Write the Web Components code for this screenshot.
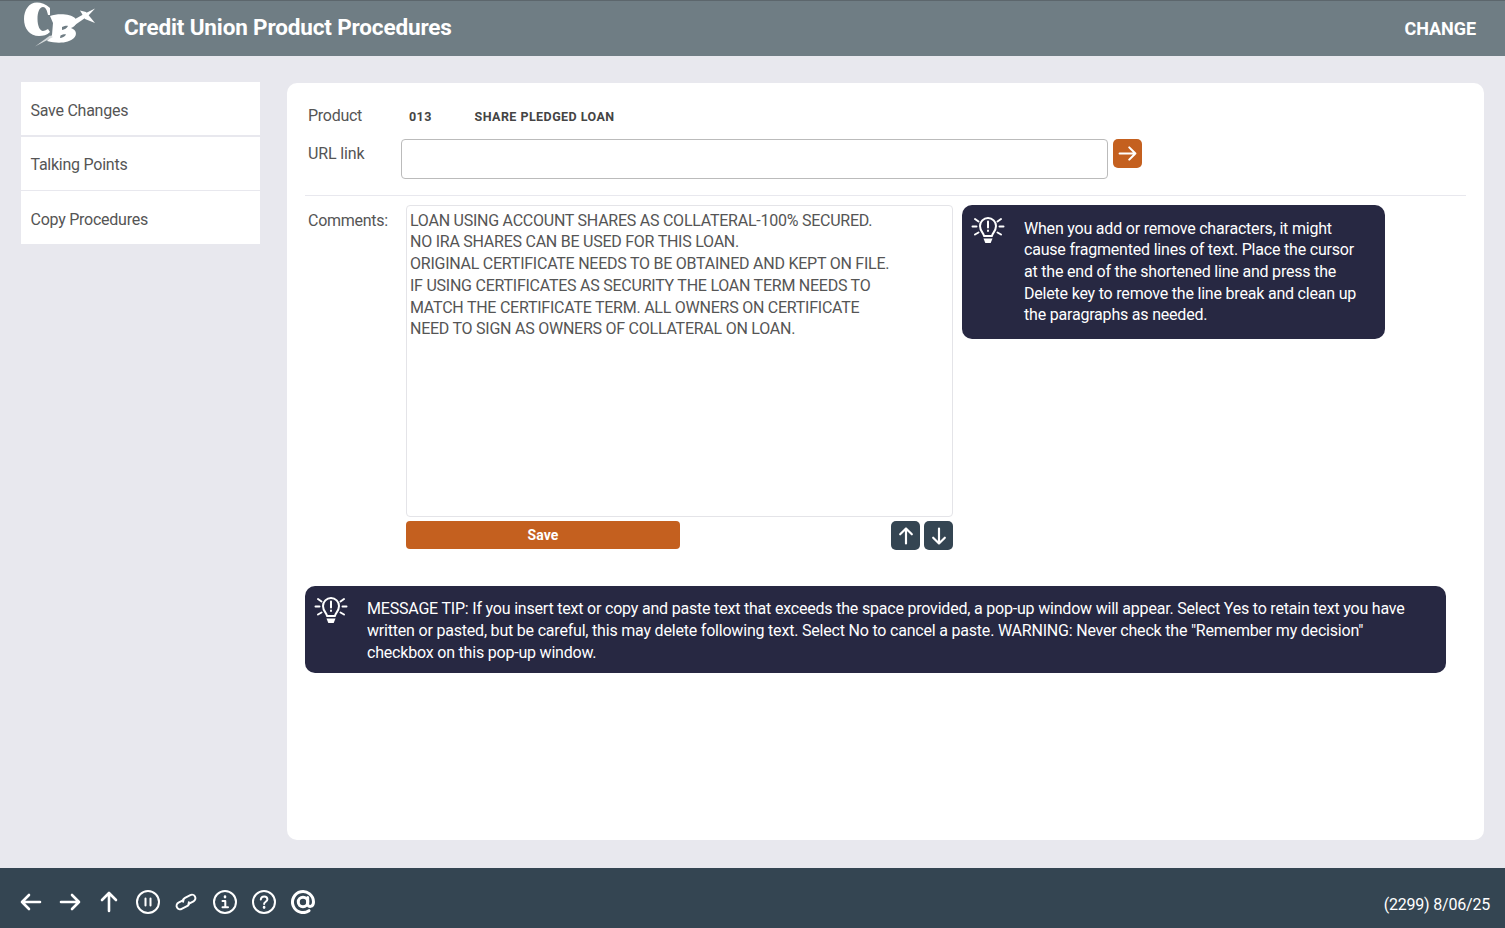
<!DOCTYPE html>
<html><head><meta charset="utf-8"><style>
html,body{margin:0;height:100%}
body{background:#e8e8ee;font-family:Roboto,"Liberation Sans",sans-serif;overflow:hidden}
cu-app{height:928px}
</style></head><body>
<cu-app>
<cu-header slot="header" title="Credit Union Product Procedures" action="CHANGE"></cu-header>
<cu-sidebar slot="side"><cu-nav-item>Save Changes</cu-nav-item><cu-nav-item>Talking Points</cu-nav-item><cu-nav-item>Copy Procedures</cu-nav-item></cu-sidebar>
<cu-panel slot="main"></cu-panel>
<cu-footer slot="footer"></cu-footer>
</cu-app>
<script>
const bulb=`<svg viewBox="0 0 34 32" width="34" height="32" fill="none" stroke="#fff" stroke-width="2" stroke-linecap="round" style="display:block"><path d="M13 21c0-3-4-4.500-4-10a8 8 0 0 1 16 0c0 5.500-4 7-4 10z" stroke-linejoin="round"/><path d="M17 6.500v6M17 15.500v.5"/><path d="M12.500 23.500h9l-1.800 4.500h-5.400z" fill="#fff" stroke="none"/><path d="M1.500 11.500h4M28.500 11.500h4M4 4l3.500 2.500M30 4L26.500 6.500M4 19.500L7.500 17.500M30 19.500L26.500 17.500"/></svg>`;
const arrow=(r,s=2,size=24)=>`<svg viewBox="0 0 24 24" width="${size}" height="${size}" fill="none" stroke="#fff" stroke-width="${s}" stroke-linecap="round" stroke-linejoin="round" style="transform:rotate(${r}deg);display:block"><path d="M3 12h18M14 5l7 7-7 7"/></svg>`;
const def=(n,css,html)=>customElements.define(n,class extends HTMLElement{constructor(){super();this.attachShadow({mode:'open'}).innerHTML=`<style>${css}</style>${html}`}connectedCallback(){const s=this.shadowRoot;s.querySelectorAll('[data-attr]').forEach(e=>e.textContent=this.getAttribute(e.dataset.attr)||'')}});
def('cu-app',`:host{display:grid;grid-template-rows:56px 1fr 60px;grid-template-columns:287px 1fr;height:928px}
::slotted([slot=header]),::slotted([slot=footer]){grid-column:1/3}`,`<slot name="header"></slot><slot name="side"></slot><slot name="main"></slot><slot name="footer"></slot>`);
def('cu-header',`:host{display:flex;align-items:center;background:#6f7d84;color:#fff;height:56px;box-sizing:border-box;border-top:1px solid #5c666c;padding:0 29px 1px 21px}
svg{display:block;flex:none;margin-top:-6px}
h1{font:700 22.500px Roboto,sans-serif;margin:-2px 0 0 27px;flex:1;letter-spacing:-.15px;white-space:nowrap}
span{font:700 18px Roboto,sans-serif;letter-spacing:-.05px}`,
`<svg width="76" height="50" viewBox="21 1 76 50"><path d="M50 9C46 5 41 3.500 37 3.500 29 3.500 24 11 24 20 24 30 30 37 39 37 43 37 47 36 50 33L48 30C46 31 44 32 43 32 40 32 37.500 27 37.500 20 37.500 13 39.500 8 43 8 45.500 8 47 11 48 16L50 16Z" fill="#fff"/><path d="M50 17C58 14 71 15 75 19 78 23 76 27 71 29 77 31 77 36 74 39 69 44 58 45 47 42L52 36 53 24Z" fill="#fff"/><path d="M62 28C64.500 27 67 26.500 68 27 67 29.500 64.500 30.500 62 31ZM60.500 36.500C62.500 35.500 65 35 66 35.500 65 37.800 62 39 60 39Z" fill="#6f7d84"/><path d="M68 24L84 15 95 9.500 88 17 72 28Z" fill="#fff"/><path d="M80 11.500L86 13 95 24 85 20Z" fill="#fff"/><path d="M35 47.500L50 36.500 53 38Z" fill="#d6dadc"/></svg><h1 data-attr="title"></h1><span data-attr="action"></span>`);
def('cu-sidebar',`:host{display:block;margin:26px 27px 0 21px;align-self:start;background:#fff}`,`<slot></slot>`);
def('cu-nav-item',`:host{display:flex;align-items:center;height:54px;padding:2px 0 0 9.500px;color:#555;font-size:16px;letter-spacing:-.25px;border-bottom:1px solid #e8e8ee;box-sizing:border-box}
:host(:first-child){border-bottom-width:2px;height:55px;padding-top:4px}
:host(:last-child){border-bottom:0;height:53px;padding-top:4px}`,`<slot></slot>`);
def('cu-tip',`:host{display:flex;background:#272842;color:#fff;border-radius:10px;font-size:16px;letter-spacing:-.2px}
.i{flex:none;margin:-3px 19px 0 0}.t{white-space:pre-line}`,`<div class="i">${bulb}</div><div class="t"><slot></slot></div>`);
def('cu-icon-btn',`:host{display:flex;align-items:center;justify-content:center;width:29px;height:29px;border-radius:5px;flex:none;background:var(--bg,#344552)}`,`<slot></slot>`);
def('cu-panel',`:host{display:block;margin:27px 21px 28px 0;background:#fff;border-radius:10px;padding:0 18px;color:#555;box-sizing:border-box;font-size:16px;letter-spacing:-.27px}
.prod{display:flex;align-items:center;height:27px;padding-left:3px}
.top{padding-top:19px}
label{width:93px;flex:none;display:block}
b{font-size:12.500px;font-weight:700;letter-spacing:.45px;color:#444;margin-top:2px}
b.c{width:65.500px;margin-left:8px}
.url{display:flex;align-items:flex-start;padding-left:3px;margin-top:10px}
.url label{padding-top:5px;line-height:19px;letter-spacing:-.15px}
.box{width:705px;height:38px;border:1px solid #bbb;border-radius:4px;background:#fff;margin-right:5px;flex:none}
.url cu-icon-btn{--bg:#c4601f}
hr{border:0;border-top:1px solid #e8e8ee;margin:16px 0 0}
.cm{display:flex;margin-top:9px;padding-left:3px}
.cm label{width:98px;line-height:19px;padding-top:6px}
.col{width:547px;flex:none}
.ta{box-sizing:border-box;height:312px;border:1px solid #e4e4e8;border-radius:4px;padding:3.700px 3px;line-height:21.700px;letter-spacing:-.245px;white-space:pre-line;color:#555;font-size:16px}
.act{display:flex;margin-top:4px;align-items:flex-start}
.save{width:274px;height:28px;background:#c4601f;border-radius:4px;color:#fff;font-weight:700;font-size:14px;letter-spacing:.1px;display:flex;align-items:center;justify-content:center}
.arr{margin-left:auto;display:flex;gap:4px}
.side{margin-left:9px;width:423px;height:134px;flex:none;padding:12.600px 20px 0 9px;box-sizing:border-box;line-height:21.700px}
.msg{width:1141px;height:87px;box-sizing:border-box;margin-top:36px;padding:12px 20px 0 9px;line-height:22px}`,
`<div class="top"></div><div class="prod"><label>Product</label><b class="c">013</b><b>SHARE PLEDGED LOAN</b></div>
<div class="url"><label>URL link</label><div class="box"></div><cu-icon-btn>${arrow(0,2.4,21)}</cu-icon-btn></div><hr>
<div class="cm"><label>Comments:</label><div class="col"><div class="ta">LOAN USING ACCOUNT SHARES AS COLLATERAL-100% SECURED.
NO IRA SHARES CAN BE USED FOR THIS LOAN.
ORIGINAL CERTIFICATE NEEDS TO BE OBTAINED AND KEPT ON FILE.
IF USING CERTIFICATES AS SECURITY THE LOAN TERM NEEDS TO
MATCH THE CERTIFICATE TERM. ALL OWNERS ON CERTIFICATE
NEED TO SIGN AS OWNERS OF COLLATERAL ON LOAN.</div>
<div class="act"><div class="save">Save</div><div class="arr"><cu-icon-btn>${arrow(-90,2.6,20)}</cu-icon-btn><cu-icon-btn>${arrow(90,2.6,20)}</cu-icon-btn></div></div></div>
<cu-tip class="side">When you add or remove characters, it might
cause fragmented lines of text. Place the cursor
at the end of the shortened line and press the
Delete key to remove the line break and clean up
the paragraphs as needed.</cu-tip></div>
<cu-tip class="msg">MESSAGE TIP: If you insert text or copy and paste text that exceeds the space provided, a pop-up window will appear. Select Yes to retain text you have
written or pasted, but be careful, this may delete following text. Select No to cancel a paste. WARNING: Never check the "Remember my decision"
checkbox on this pop-up window.</cu-tip>`);
const ic={
pause:`<circle cx="12" cy="12" r="11"/><path d="M9.500 8.500v7M14.500 8.500v7"/>`,
link:`<g transform="rotate(-27 12 12)"><path d="M10.500 9.200H5a3.500 3.500 0 0 0 0 7h6a3.500 3.500 0 0 0 3.400-2.700"/><path d="M13.500 14.800H19a3.500 3.500 0 0 0 0-7h-6a3.500 3.500 0 0 0-3.400 2.700"/></g>`,
info:`<circle cx="12" cy="12" r="11"/><path d="M12 6.500v.6" stroke-width="2.600"/><path d="M9.500 11H12.300V17M9.500 17.300h5.500"/>`,
help:`<circle cx="12" cy="12" r="11"/><path d="M8.800 9.500c.2-2 1.700-3 3.400-3 1.900 0 3.200 1.200 3.200 2.800 0 2.400-3.300 2.500-3.300 4.700"/><path d="M12.100 17v.6" stroke-width="2.600"/>`,
at:`<circle cx="12" cy="12" r="4.700"/><path d="M16.700 7.500v6.500c0 3.500 5.800 3.500 5.800-2a10.500 10.500 0 1 0-4.500 8.700"/>`};
const sv=(k,w=2)=>`<svg width="24" height="24" viewBox="0 0 24 24" fill="none" stroke="#fff" stroke-width="${w}" stroke-linecap="round" stroke-linejoin="round" style="display:block">${ic[k]}</svg>`;
def('cu-footer',`:host{display:flex;align-items:center;height:60px;background:#344552;color:#fff;padding:0 15px 0 19px;font-size:16px;letter-spacing:-.2px}
.n{display:flex;gap:15px;flex:1;padding-top:8px}
.n svg:nth-child(5){margin-left:-1px}
.d{padding-top:12px}`,`<div class="n">${arrow(180,2.6)}${arrow(0,2.6)}${arrow(-90,2.6)}${sv('pause')}${sv('link')}${sv('info')}${sv('help')}${sv('at',3)}</div><div class="d">(2299) 8/06/25</div>`);
</script>
</body></html>
